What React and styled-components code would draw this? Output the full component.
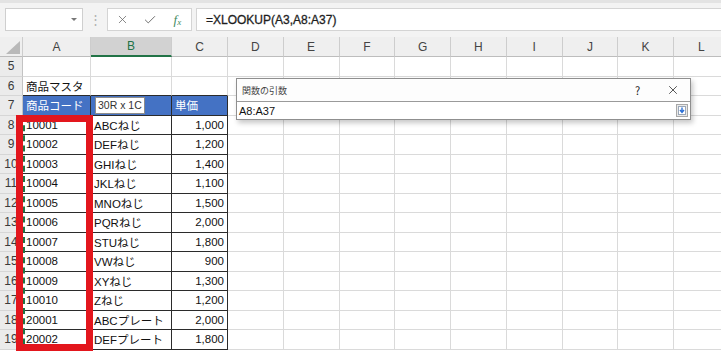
import React from 'react';
import styled, { createGlobalStyle } from 'styled-components';
import { X, Check } from 'lucide-react';

const GlobalStyle = createGlobalStyle`
  body {
    margin: 0;
    background: #fff;
  }
`;

const COLS = '23px 68px 81px 56px repeat(9, 55.75px)';
const LETTERS = ['A', 'B', 'C', 'D', 'E', 'F', 'G', 'H', 'I', 'J', 'K', 'L'];

const Sheet = styled.div`
  position: relative;
  width: 721px;
  height: 351px;
  overflow: hidden;
  background: #fff;
  font-family: 'Liberation Sans', 'Noto Sans CJK JP', sans-serif;
`;

const Toolbar = styled.div`
  display: flex;
  align-items: flex-start;
  box-sizing: border-box;
  height: 37px;
  padding: 5px 0 0 5px;
  background: #f3f3f3;
  border-top: 3px solid #e3e3e3;
`;

const NameBox = styled.div`
  display: flex;
  align-items: center;
  justify-content: flex-end;
  box-sizing: border-box;
  width: 78px;
  height: 23px;
  padding-right: 5px;
  background: #fff;
  border: 1px solid #cfcfcf;
`;

const Caret = styled.span`
  width: 0;
  height: 0;
  border-left: 3px solid transparent;
  border-right: 3px solid transparent;
  border-top: 3px solid #777;
`;

const Dots = styled.div`
  width: 24px;
  height: 23px;
  display: flex;
  align-items: center;
  justify-content: center;
  color: #b0b0b0;
  font-size: 13px;
`;

const FnButtons = styled.div`
  display: flex;
  box-sizing: border-box;
  width: 85px;
  height: 23px;
  padding-left: 1px;
  background: #fff;
  border: 1px solid #d4d4d4;
`;

const FnSlot = styled.div`
  width: 28px;
  display: flex;
  align-items: center;
  justify-content: center;
  color: #666;
`;

const Fx = styled.span`
  font-family: 'Liberation Serif', serif;
  font-style: italic;
  font-size: 13px;
  color: #3f8a5f;
  sub {
    font-size: 9px;
    vertical-align: -1px;
  }
`;

const FormulaInput = styled.div`
  flex: 1;
  display: flex;
  align-items: center;
  box-sizing: border-box;
  height: 23px;
  margin-left: 4px;
  padding-left: 9px;
  background: #fff;
  border: 1px solid #d4d4d4;
  border-right: none;
  font-size: 12px;
  color: #1e1e1e;
  -webkit-text-stroke: 0.3px #1e1e1e;
`;

const Row = styled.div`
  display: grid;
  grid-template-columns: ${COLS};
  height: ${(p) => p.$h || 19.5}px;
`;

const HeadCell = styled.div`
  display: flex;
  align-items: center;
  justify-content: center;
  box-sizing: border-box;
  background: ${(p) => (p.$active ? '#d2d2d2' : '#efefef')};
  color: ${(p) => (p.$active ? '#217346' : '#444')};
  border-right: 1px solid #cdcdcd;
  border-bottom: ${(p) => (p.$active ? '2px solid #217346' : '1px solid #bdbdbd')};
  font-size: 12px;
`;

const Corner = styled(HeadCell)`
  align-items: flex-end;
  justify-content: flex-end;
  padding: 0 2px 2px 0;
`;

const RowHead = styled.div`
  display: flex;
  align-items: center;
  justify-content: center;
  box-sizing: border-box;
  background: #ebebeb;
  color: #3a3a3a;
  border-right: 1px solid #c3c3c3;
  border-bottom: 1px solid #d6d6d6;
  font-size: 12px;
`;

const Cell = styled.div`
  display: flex;
  align-items: center;
  justify-content: ${(p) => (p.$right ? 'flex-end' : 'flex-start')};
  box-sizing: border-box;
  padding: 0 3px;
  white-space: nowrap;
  background: ${(p) => (p.$head ? '#4472c4' : '#fff')};
  color: ${(p) => (p.$head ? '#fff' : '#111')};
  border-right: 1px solid ${(p) => (p.$table ? '#2b2b2b' : '#dadada')};
  border-bottom: 1px solid ${(p) => (p.$table || p.$topOfTable ? '#2b2b2b' : '#dadada')};
  font-size: 11.5px;
`;

const RangeHint = styled.span`
  margin-left: 1px;
  padding: 0 2px;
  height: 15px;
  line-height: 15px;
  background: #fff;
  border: 1px solid #8c8c8c;
  color: #333;
  font-size: 10.5px;
`;

const Marquee = styled.div`
  position: absolute;
  left: 23px;
  top: 115px;
  width: 68px;
  height: 260px;
  box-sizing: border-box;
  border: 2px dashed #217346;
`;

const RedFrame = styled.div`
  position: absolute;
  left: 16px;
  top: 115px;
  width: 77px;
  height: 236px;
  box-sizing: border-box;
  border: 7px solid #e3161d;
`;

const Dialog = styled.div`
  position: absolute;
  left: 236px;
  top: 78px;
  width: 455px;
  height: 42px;
  box-sizing: border-box;
  display: flex;
  flex-direction: column;
  background: #fdfdfd;
  border: 1px solid #8f8f8f;
  box-shadow: 2px 3px 5px rgba(0, 0, 0, 0.22);
`;

const DialogTitle = styled.div`
  flex: 1;
  display: flex;
  align-items: center;
  padding: 0 0 0 5px;
  font-family: 'Noto Sans CJK JP', sans-serif;
  font-size: 9px;
  color: #444;
`;

const TitleText = styled.span`
  flex: 1;
`;

const TitleButton = styled.span`
  width: 35px;
  display: flex;
  justify-content: center;
  align-items: center;
  color: #222;
  font-size: 11px;
`;

const DialogInput = styled.div`
  display: flex;
  align-items: center;
  height: 17px;
  padding: 0 2px;
  background: #fff;
  border-top: 1px solid #9a9a9a;
  font-size: 11px;
  color: #111;
`;

const InputText = styled.span`
  flex: 1;
`;

const collapseIcon = (
  <svg width="12" height="13" viewBox="0 0 12 13">
    <rect x="0.5" y="0.5" width="11" height="12" fill="#e9e9e9" stroke="#a8a8a8" />
    <rect x="2.5" y="2.5" width="7" height="8" fill="#fff" stroke="#9aa7b8" />
    <path d="M6 3.5v4M4 6l2 2.5L8 6" fill="none" stroke="#2a6fd6" strokeWidth="1.4" />
  </svg>
);

const rows = [
  { n: 5 },
  { n: 6, a: '商品マスタ', topOfTable: true },
  { n: 7, head: true, a: '商品コード', c: '単価' },
  { n: 8, a: '10001', b: 'ABCねじ', c: '1,000' },
  { n: 9, a: '10002', b: 'DEFねじ', c: '1,200' },
  { n: 10, a: '10003', b: 'GHIねじ', c: '1,400' },
  { n: 11, a: '10004', b: 'JKLねじ', c: '1,100' },
  { n: 12, a: '10005', b: 'MNOねじ', c: '1,500' },
  { n: 13, a: '10006', b: 'PQRねじ', c: '2,000' },
  { n: 14, a: '10007', b: 'STUねじ', c: '1,800' },
  { n: 15, a: '10008', b: 'VWねじ', c: '900' },
  { n: 16, a: '10009', b: 'XYねじ', c: '1,300' },
  { n: 17, a: '10010', b: 'Zねじ', c: '1,200' },
  { n: 18, a: '20001', b: 'ABCプレート', c: '2,000' },
  { n: 19, a: '20002', b: 'DEFプレート', c: '1,800' },
];

const SheetRow = ({ r }) => {
  const table = r.n >= 7;
  const tableProps = { $table: table, $topOfTable: r.topOfTable, $head: r.head };
  return (
    <Row>
      <RowHead>{r.n}</RowHead>
      <Cell {...tableProps}>{r.a}</Cell>
      <Cell {...tableProps}>
        {r.head ? <RangeHint>30R x 1C</RangeHint> : r.b}
      </Cell>
      <Cell {...tableProps} $right={!r.head}>
        {r.c}
      </Cell>
      {LETTERS.slice(3).map((l) => (
        <Cell key={l} />
      ))}
    </Row>
  );
};

const App = () => {
  return (
    <>
      <GlobalStyle />
      <Sheet>
        <Toolbar>
          <NameBox>
            <Caret />
          </NameBox>
          <Dots>⋮</Dots>
          <FnButtons>
            <FnSlot>
              <X size={13} strokeWidth={1.4} />
            </FnSlot>
            <FnSlot>
              <Check size={14} strokeWidth={1.6} />
            </FnSlot>
            <FnSlot>
              <Fx>
                f<sub>x</sub>
              </Fx>
            </FnSlot>
          </FnButtons>
          <FormulaInput>=XLOOKUP(A3,A8:A37)</FormulaInput>
        </Toolbar>

        <Row $h={20}>
          <Corner>
            <svg width="14" height="13" viewBox="0 0 14 13">
              <polygon points="14,0 14,13 0,13" fill="#b9b9b9" />
            </svg>
          </Corner>
          {LETTERS.map((l) => (
            <HeadCell key={l} $active={l === 'B'}>
              {l}
            </HeadCell>
          ))}
        </Row>

        {rows.map((r) => (
          <SheetRow key={r.n} r={r} />
        ))}

        <Marquee />
        <RedFrame />

        <Dialog>
          <DialogTitle>
            <TitleText>関数の引数</TitleText>
            <TitleButton>?</TitleButton>
            <TitleButton>
              <X size={14} strokeWidth={1.3} />
            </TitleButton>
          </DialogTitle>
          <DialogInput>
            <InputText>A8:A37</InputText>
            {collapseIcon}
          </DialogInput>
        </Dialog>
      </Sheet>
    </>
  );
};

export default App;
